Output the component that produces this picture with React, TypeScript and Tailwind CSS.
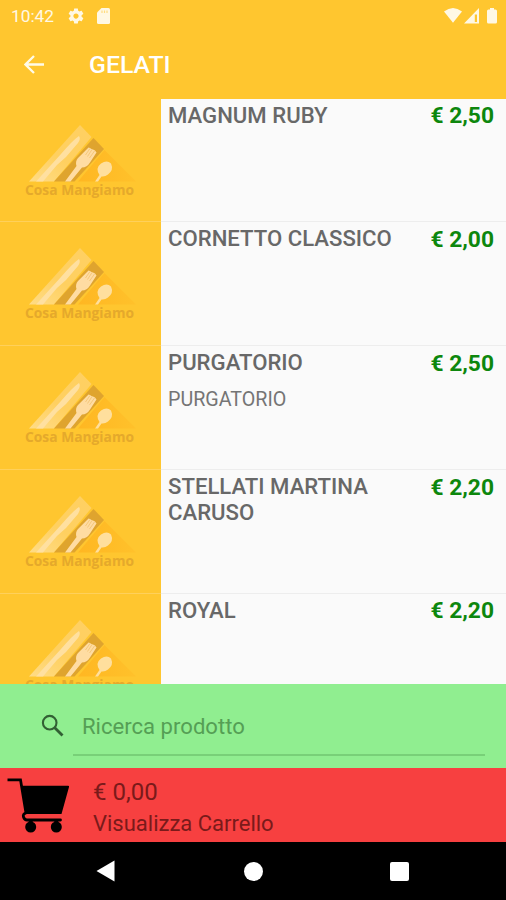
interface Product {
  name: string;
  description?: string;
  price: string;
}

const PRODUCTS: Product[] = [
  { name: "MAGNUM RUBY", price: "€ 2,50" },
  { name: "CORNETTO CLASSICO", price: "€ 2,00" },
  { name: "PURGATORIO", description: "PURGATORIO", price: "€ 2,50" },
  { name: "STELLATI MARTINA CARUSO", price: "€ 2,20" },
  { name: "ROYAL", price: "€ 2,20" },
];

function StatusBar() {
  return (
    <div className="flex h-[32px] shrink-0 items-center pl-[11px] pr-[8px] text-[#fff8e4]">
      <span className="w-[56px] pt-px text-[17.3px] leading-none">10:42</span>
      <svg className="h-[18px] w-[18px]" viewBox="0 0 24 24" fill="currentColor">
        <path d="M19.43 12.98c.04-.32.07-.64.07-.98s-.03-.66-.07-.98l2.11-1.65c.19-.15.24-.42.12-.64l-2-3.46c-.12-.22-.39-.3-.61-.22l-2.49 1c-.52-.4-1.08-.73-1.69-.98l-.38-2.65C14.46 2.18 14.25 2 14 2h-4c-.25 0-.46.18-.49.42l-.38 2.65c-.61.25-1.17.59-1.69.98l-2.49-1c-.23-.09-.49 0-.61.22l-2 3.46c-.13.22-.07.49.12.64l2.11 1.65c-.04.32-.07.65-.07.98s.03.66.07.98l-2.11 1.65c-.19.15-.24.42-.12.64l2 3.46c.12.22.39.3.61.22l2.49-1c.52.4 1.08.73 1.69.98l.38 2.65c.03.24.24.42.49.42h4c.25 0 .46-.18.49-.42l.38-2.65c.61-.25 1.17-.59 1.69-.98l2.49 1c.23.09.49 0 .61-.22l2-3.46c.12-.22.07-.49-.12-.64l-2.11-1.65zM12 15.5c-1.93 0-3.5-1.57-3.5-3.5s1.57-3.5 3.5-3.5 3.5 1.57 3.5 3.5-1.57 3.5-3.5 3.5z" />
      </svg>
      <svg className="ml-[12px] h-[16px] w-[13px]" viewBox="0 0 13 16">
        <path fill="currentColor" d="M4.5 0H11.5Q13 0 13 1.5V14.5Q13 16 11.5 16H1.5Q0 16 0 14.5V4.5Z" />
        <path stroke="#ffdc80" strokeWidth="1.2" d="M5 2.5V5M7.5 2.5V5M10 2.5V5" />
      </svg>
      <svg className="ml-auto h-[16px] w-[54px]" viewBox="0 0 54 16" fill="currentColor">
        <path d="M0 3.5Q9 -3.5 18 3.5L9 14.7Z" />
        <path fillRule="evenodd" d="M20 15.5L35 0V15.5ZM30.800 6.500V14H33V6.500Z" />
        <path d="M46 0H50V1.5H51.5Q53 1.5 53 3V14Q53 15.5 51.5 15.5H44.5Q43 15.5 43 14V3Q43 1.5 44.5 1.5H46Z" />
      </svg>
    </div>
  );
}

function Toolbar() {
  return (
    <header className="flex h-[66.7px] shrink-0 items-center pl-[24px] text-white">
      <svg className="-mt-[2px] h-[19px] w-[20px]" viewBox="0 0 20 19" fill="none" stroke="#fffbe9" strokeWidth="2.3">
        <path d="M20 9.5H2M10 1L1.5 9.5L10 18" />
      </svg>
      <h1 className="ml-[45px] pt-px text-[24.8px] font-medium leading-none">GELATI</h1>
    </header>
  );
}

function Logo() {
  return (
    <svg className="h-[123px] w-[160px] shrink-0" viewBox="0 0 160 123">
      <defs>
        <linearGradient id="knife-panel" x1="0" y1="1" x2="0.7" y2="0">
          <stop offset="0" stopColor="#ffdc86" />
          <stop offset="0.5" stopColor="#ffd060" />
          <stop offset="1" stopColor="#ffd062" />
        </linearGradient>
        <linearGradient id="spoon-panel" x1="0" y1="0" x2="1" y2="0">
          <stop offset="0" stopColor="#ffb722" />
          <stop offset="1" stopColor="#ffc12b" />
        </linearGradient>
      </defs>
      {/* knife */}
      <path fill="url(#knife-panel)" d="M80 26L91.500 38L54 82.500H29Z" />
      <path fill="#ffe0a0" d="M79 37Q81 39.500 78 44L66 58L57 66L43 82.500H36L61 55Q73 41 79 37Z" />
      {/* fork */}
      <path fill="#dfa42e" d="M93.500 39L104 50L74.500 82.500H54Z" />
      <path
        fill="#ffdca2"
        d="M88.500 48.500L90 49L91.500 50L93 50.500L95 51.500L96.500 53.500L90 63.500Q87 68.500 82 68.500L70.500 82.500H65L76.500 67Q75 62.500 78 59Z"
      />
      <path fill="none" stroke="#efbe68" strokeWidth="0.700" d="M90 49.500L85.500 56M92 50.500L87.500 57.500M94.500 52L89.500 59" />
      {/* spoon */}
      <path fill="url(#spoon-panel)" d="M104.500 51L136 82.500H78Z" />
      <path fill="#ffdf9d" d="M99.500 76Q95 69 101 64.500Q107 60.500 111 64.500Q114 71 108 75.500Q105 78 101.500 77.500L98 82.500H95Z" />
      <text
        x="25"
        y="96"
        textLength="109"
        lengthAdjust="spacingAndGlyphs"
        fill="#e5a92b"
        className="font-['Open_Sans',sans-serif] text-[14.5px] font-bold"
      >
        Cosa Mangiamo
      </text>
    </svg>
  );
}

function ProductRow({ product }: { product: Product }) {
  return (
    <li className="flex h-[123.8px] shrink-0 bg-[#fafafa]">
      <div className="w-[160.5px] shrink-0 border-b border-[#ffd05a] bg-[#ffc62f]">
        <Logo />
      </div>
      <div className="flex min-w-0 flex-1 items-start justify-between border-b border-[#ededed] pl-[7.5px] pr-[12px] pt-[3px]">
        <div className="w-[235px]">
          <h2 className="text-[22.15px] font-medium leading-[26px] text-[#686868]">{product.name}</h2>
          {product.description && (
            <p className="mt-[13px] text-[19.7px] leading-[24px] text-[#757575]">{product.description}</p>
          )}
        </div>
        <span className="whitespace-nowrap pt-[0.5px] text-[22.8px] font-bold leading-[28px] text-[#0d870d]">
          {product.price}
        </span>
      </div>
    </li>
  );
}

function SearchBar() {
  return (
    <div className="flex h-[84px] shrink-0 bg-[#90ee90] pl-[41px] pr-[21px]">
      <svg className="mt-[30px] h-[23px] w-[23px]" viewBox="0 0 23 23" fill="none" stroke="#326034">
        <circle cx="8.7" cy="8.7" r="6.800" strokeWidth="2.1" />
        <path d="M13.5 13.5L21.5 21.5" strokeWidth="2.8" />
      </svg>
      <div className="ml-[9px] h-[71.5px] flex-1 border-b-2 border-[#78d078]">
        <input
          className="mt-[28px] w-full pl-[9px] text-[22.1px] leading-[29px] outline-none placeholder:text-[#559f55]"
          placeholder="Ricerca prodotto"
        />
      </div>
    </div>
  );
}

function CartBar() {
  return (
    <div className="flex h-[74px] shrink-0 bg-[#f74040] pl-[7px]">
      <svg className="mt-[9px] h-[57px] w-[63px]" viewBox="0 0 63 57">
        <path fill="none" stroke="#000" strokeWidth="2.8" d="M0.5 2.8H13.5L19 36" />
        <path fill="#000" d="M14.5 8.7H61Q62.5 8.700 62 10L54.500 37H18.500Z" />
        <path fill="none" stroke="#000" strokeWidth="2.8" strokeLinecap="round" d="M19 36Q15.500 37 16.500 40Q17.500 43 20 43H53.500" />
        <path stroke="#000" strokeWidth="4" d="M23.700 43V47M49.300 43V47" />
        <circle cx="23.7" cy="50" r="5.500" />
        <circle cx="49.3" cy="50" r="5.500" />
      </svg>
      <div className="ml-[23px] pt-[9px] text-[#7a1a1a]">
        <p className="text-[24px] leading-[30px]">€ 0,00</p>
        <p className="pt-px text-[22px] leading-[32px]">Visualizza Carrello</p>
      </div>
    </div>
  );
}

function NavigationBar() {
  return (
    <nav className="flex h-[58px] shrink-0 items-center bg-black pl-[96px] text-white">
      <svg className="h-[22px] w-[19px]" viewBox="0 0 19 22" fill="currentColor">
        <path d="M0.5 11L18.5 0.5V21.5Z" />
      </svg>
      <span className="ml-[129px] h-[19px] w-[19px] rounded-full bg-white" />
      <span className="ml-[127px] h-[19px] w-[19px] rounded-[2px] bg-white" />
    </nav>
  );
}

export default function App() {
  return (
    <div className="flex h-[900px] w-[506px] flex-col overflow-hidden bg-[#ffc62f] font-[Roboto,sans-serif]">
      <StatusBar />
      <Toolbar />
      <ul className="flex min-h-0 flex-1 flex-col overflow-hidden">
        {PRODUCTS.map((product) => (
          <ProductRow key={product.name} product={product} />
        ))}
      </ul>
      <SearchBar />
      <CartBar />
      <NavigationBar />
    </div>
  );
}
